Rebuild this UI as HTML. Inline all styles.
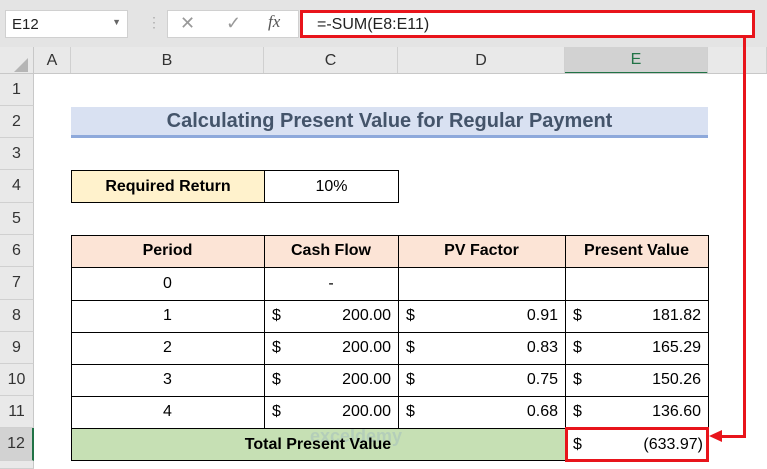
<!DOCTYPE html>
<html><head><style>
*{margin:0;padding:0;box-sizing:border-box}
body{width:767px;height:469px;overflow:hidden;background:#fff;font-family:"Liberation Sans",sans-serif;position:relative}
.a{position:absolute}
.c{position:absolute;display:flex;align-items:center;justify-content:center;font-size:16px;color:#000}
.rh{position:absolute;left:0;width:34px;background:#e9e9e9;border-bottom:1px solid #d0d0d0;border-right:1px solid #c8c8c8;display:flex;align-items:center;justify-content:center;font-size:16px;color:#333}
.ch{position:absolute;top:47px;height:27px;background:#e9e9e9;border-right:1px solid #d0d0d0;display:flex;align-items:center;justify-content:center;font-size:16px;color:#333}
.b{font-weight:bold}
.t{border:1px solid #000}
.d{position:absolute;font-size:16px;display:flex;align-items:center}
</style></head><body>
<div class="a" style="left:0;top:0;width:767px;height:47px;background:#e4e4e4"></div>
<div class="a" style="left:5px;top:10px;width:123px;height:28px;background:#fff;border:1px solid #d0d0d0;font-size:15px;padding:5px 6px;color:#222">E12<span style="position:absolute;right:6px;top:6px;font-size:9px;color:#666">▼</span></div>
<div class="a" style="left:147px;top:14px;color:#aaa;font-size:14px">⋮</div>
<div class="a" style="left:167px;top:10px;width:132px;height:28px;background:#fff;border:1px solid #d0d0d0"></div>
<div class="a" style="left:180px;top:13px;color:#999;font-size:18px">✕</div>
<div class="a" style="left:226px;top:13px;color:#999;font-size:18px">✓</div>
<div class="a" style="left:268px;top:12px;color:#555;font-size:17px;font-style:italic;font-family:'Liberation Serif',serif">fx</div>
<div class="a" style="left:300px;top:10px;width:455px;height:28px;background:#fff;border:3px solid #e8141b;font-size:16px;padding:3px 14px;color:#222">=-SUM(E8:E11)</div>
<div class="a" style="left:0;top:47px;width:34px;height:27px;background:#e9e9e9;border-right:1px solid #c8c8c8"></div>
<div class="a" style="left:14px;top:58px;width:0;height:0;border-left:14px solid transparent;border-bottom:14px solid #b5b5b5"></div>
<div class="ch" style="left:34px;width:37px">A</div>
<div class="ch" style="left:71px;width:193px">B</div>
<div class="ch" style="left:264px;width:134px">C</div>
<div class="ch" style="left:398px;width:167px">D</div>
<div class="ch" style="left:565px;width:143px;background:#d2d2d2;color:#217346;border-bottom:2px solid #217346">E</div>
<div class="ch" style="left:708px;width:59px"></div>
<div class="a" style="left:0;top:73px;width:767px;height:1px;background:#c8c8c8"></div>
<div class="rh" style="top:74px;height:32px">1</div>
<div class="rh" style="top:106px;height:32px">2</div>
<div class="rh" style="top:138px;height:32px">3</div>
<div class="rh" style="top:170px;height:33px">4</div>
<div class="rh" style="top:203px;height:32px">5</div>
<div class="rh" style="top:235px;height:32px">6</div>
<div class="rh" style="top:267px;height:33px">7</div>
<div class="rh" style="top:300px;height:32px">8</div>
<div class="rh" style="top:332px;height:32px">9</div>
<div class="rh" style="top:364px;height:32px">10</div>
<div class="rh" style="top:396px;height:32px">11</div>
<div class="rh" style="top:428px;height:33px;background:#d2d2d2;border-right:2px solid #217346">12</div>
<div class="rh" style="top:461px;height:8px"></div>
<div class="c b" style="left:71px;top:107px;width:637px;height:31px;background:#d9e1f2;border-bottom:3px solid #8ea9db;color:#44546a;font-size:20px">Calculating Present Value for Regular Payment</div>
<div class="c b t" style="left:71px;top:170px;width:194px;height:33px;background:#fff2cc">Required Return</div>
<div class="c t" style="left:264px;top:170px;width:135px;height:33px">10%</div>
<div class="a t" style="left:71px;top:235px;width:638px;height:226px"></div>
<div class="a" style="left:72px;top:236px;width:636px;height:31px;background:#fce4d6"></div>
<div class="c b" style="left:71px;top:235px;width:193px;height:32px">Period</div>
<div class="c b" style="left:264px;top:235px;width:134px;height:32px">Cash Flow</div>
<div class="c b" style="left:398px;top:235px;width:167px;height:32px">PV Factor</div>
<div class="c b" style="left:565px;top:235px;width:143px;height:32px">Present Value</div>
<div class="a" style="left:72px;top:429px;width:493px;height:31px;background:#c6e0b4"></div>
<div class="a" style="left:310px;top:426px;font-size:18px;font-weight:bold;color:rgba(140,165,200,0.3)">exceldemy</div>
<div class="c b" style="left:71px;top:428px;width:494px;height:33px">Total Present Value</div>
<div class="a" style="left:71px;top:267px;width:638px;height:1px;background:#000"></div>
<div class="a" style="left:71px;top:300px;width:638px;height:1px;background:#000"></div>
<div class="a" style="left:71px;top:332px;width:638px;height:1px;background:#000"></div>
<div class="a" style="left:71px;top:364px;width:638px;height:1px;background:#000"></div>
<div class="a" style="left:71px;top:396px;width:638px;height:1px;background:#000"></div>
<div class="a" style="left:71px;top:428px;width:638px;height:1px;background:#000"></div>
<div class="a" style="left:264px;top:235px;width:1px;height:193px;background:#000"></div>
<div class="a" style="left:398px;top:235px;width:1px;height:193px;background:#000"></div>
<div class="a" style="left:565px;top:235px;width:1px;height:226px;background:#000"></div>
<div class="c" style="left:71px;top:267px;width:193px;height:33px">0</div>
<div class="c" style="left:264px;top:267px;width:134px;height:33px">-</div>
<div class="c" style="left:71px;top:300px;width:193px;height:32px">1</div>
<div class="c" style="left:71px;top:332px;width:193px;height:32px">2</div>
<div class="c" style="left:71px;top:364px;width:193px;height:32px">3</div>
<div class="c" style="left:71px;top:396px;width:193px;height:32px">4</div>
<div class="d" style="left:272px;top:300px;height:32px">$</div><div class="d" style="left:264px;top:300px;width:127px;height:32px;justify-content:flex-end">200.00</div>
<div class="d" style="left:272px;top:332px;height:32px">$</div><div class="d" style="left:264px;top:332px;width:127px;height:32px;justify-content:flex-end">200.00</div>
<div class="d" style="left:272px;top:364px;height:32px">$</div><div class="d" style="left:264px;top:364px;width:127px;height:32px;justify-content:flex-end">200.00</div>
<div class="d" style="left:272px;top:396px;height:32px">$</div><div class="d" style="left:264px;top:396px;width:127px;height:32px;justify-content:flex-end">200.00</div>
<div class="d" style="left:406px;top:300px;height:32px">$</div><div class="d" style="left:398px;top:300px;width:160px;height:32px;justify-content:flex-end">0.91</div>
<div class="d" style="left:406px;top:332px;height:32px">$</div><div class="d" style="left:398px;top:332px;width:160px;height:32px;justify-content:flex-end">0.83</div>
<div class="d" style="left:406px;top:364px;height:32px">$</div><div class="d" style="left:398px;top:364px;width:160px;height:32px;justify-content:flex-end">0.75</div>
<div class="d" style="left:406px;top:396px;height:32px">$</div><div class="d" style="left:398px;top:396px;width:160px;height:32px;justify-content:flex-end">0.68</div>
<div class="d" style="left:573px;top:300px;height:32px">$</div><div class="d" style="left:565px;top:300px;width:136px;height:32px;justify-content:flex-end">181.82</div>
<div class="d" style="left:573px;top:332px;height:32px">$</div><div class="d" style="left:565px;top:332px;width:136px;height:32px;justify-content:flex-end">165.29</div>
<div class="d" style="left:573px;top:364px;height:32px">$</div><div class="d" style="left:565px;top:364px;width:136px;height:32px;justify-content:flex-end">150.26</div>
<div class="d" style="left:573px;top:396px;height:32px">$</div><div class="d" style="left:565px;top:396px;width:136px;height:32px;justify-content:flex-end">136.60</div>
<div class="d" style="left:573px;top:428px;height:33px">$</div><div class="d" style="left:565px;top:428px;width:138px;height:33px;justify-content:flex-end">(633.97)</div>
<div class="a" style="left:565px;top:427px;width:144px;height:35px;border:3px solid #e8141b"></div>
<div class="a" style="left:743px;top:38px;width:3px;height:400px;background:#e8141b"></div>
<div class="a" style="left:720px;top:435px;width:26px;height:3px;background:#e8141b"></div>
<div class="a" style="left:709px;top:430px;width:0;height:0;border-top:6.5px solid transparent;border-bottom:6.5px solid transparent;border-right:13px solid #e8141b"></div>
</body></html>
